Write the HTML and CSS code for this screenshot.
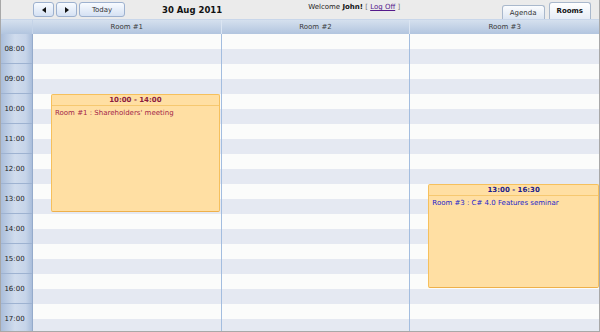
FILE: index.html
```html
<!DOCTYPE html>
<html lang="en">
<head>
    <meta charset="UTF-8">
    <title>Rooms Scheduler</title>
    <link rel="stylesheet" href="styles.css">
</head>
<body>
    <div class="scheduler">
        <div class="toolbar">
            <div class="nav">
                <button class="btn arrow"><span class="tri left"></span></button>
                <button class="btn arrow"><span class="tri right"></span></button>
                <button class="btn today">Today</button>
            </div>
            <div class="date">30 Aug 2011</div>
            <div class="welcome">Welcome <b>John!</b> <span class="br">[</span> <a href="#">Log Off</a> <span class="br">]</span></div>
            <div class="tabs">
                <div class="tab">Agenda</div>
                <div class="tab active">Rooms</div>
            </div>
        </div>

        <div class="grid header">
            <div class="corner"></div>
            <div class="room">Room #1</div>
            <div class="room">Room #2</div>
            <div class="room last">Room #3</div>
        </div>

        <div class="grid body">
            <div class="times">
                <div class="hour">08:00</div>
                <div class="hour">09:00</div>
                <div class="hour">10:00</div>
                <div class="hour">11:00</div>
                <div class="hour">12:00</div>
                <div class="hour">13:00</div>
                <div class="hour">14:00</div>
                <div class="hour">15:00</div>
                <div class="hour">16:00</div>
                <div class="hour">17:00</div>
            </div>
            <div class="day">
                <div class="event red" style="top: 60px; height: 118px;">
                    <div class="event_time">10:00 - 14:00</div>
                    <div class="event_text">Room #1 : Shareholders' meeting</div>
                </div>
            </div>
            <div class="day"></div>
            <div class="day last">
                <div class="event blue" style="top: 150px; height: 104px;">
                    <div class="event_time">13:00 - 16:30</div>
                    <div class="event_text">Room #3 : C# 4.0 Features seminar</div>
                </div>
            </div>
        </div>
    </div>
</body>
</html>
```

FILE: styles.css
```css
  body {
      margin: 0;
      font-family: "DejaVu Sans", Tahoma, sans-serif;
      font-size: 7px;
      color: #333;
  }

  .scheduler {
      width: 600px;
      height: 332px;
      box-sizing: border-box;
      border: 1px solid #a8a8a8;
      border-top: none;
      display: flex;
      flex-direction: column;
      overflow: hidden;
  }

  /* Top bar */
  .toolbar {
      height: 19px;
      flex-shrink: 0;
      background: #ebebeb;
      display: flex;
      align-items: flex-start;
      padding-left: 32px;
  }

  .nav {
      display: flex;
      gap: 2px;
      margin-top: 2px;
  }

  .btn {
      height: 15px;
      border: 1px solid #9db1cf;
      border-radius: 3px;
      background: linear-gradient(#f8fbff, #d5e1f3);
      font-family: inherit;
      font-size: 7px;
      color: #333;
      padding: 0;
      display: flex;
      align-items: center;
      justify-content: center;
  }

  .btn.arrow {
      width: 21px;
  }

  .btn.today {
      width: 46px;
  }

  .tri {
      width: 0;
      height: 0;
      border-top: 3px solid transparent;
      border-bottom: 3px solid transparent;
  }

  .tri.left {
      border-right: 4px solid #111;
  }

  .tri.right {
      border-left: 4px solid #111;
  }

  .date {
      margin-left: 37px;
      margin-top: 5px;
      font-weight: bold;
      font-size: 8.5px;
      color: #111;
  }

  .welcome {
      margin-left: 86px;
      margin-top: 3px;
      color: #222;
  }

  .welcome b {
      color: #111;
  }

  .welcome .br {
      color: #777;
  }

  .welcome a {
      color: #551a8b;
  }

  .tabs {
      margin-left: auto;
      margin-right: 8px;
      align-self: flex-end;
      display: flex;
      align-items: flex-end;
      gap: 4px;
  }

  .tab {
      height: 13px;
      padding: 0 7px;
      border: 1px solid #a9b8cc;
      border-bottom: none;
      border-radius: 3px 3px 0 0;
      background: linear-gradient(#fbfcfe, #dde6f2);
      display: flex;
      align-items: center;
      color: #333;
  }

  .tab.active {
      height: 16px;
      padding: 0 7px;
      font-weight: bold;
      color: #111;
      background: linear-gradient(#ffffff, #e6edf7);
  }

  /* Columns */
  .grid {
      display: grid;
      grid-template-columns: 32px repeat(3, 1fr);
  }

  .header {
      height: 15px;
      flex-shrink: 0;
      background: linear-gradient(#d5e0ee, #b2c5df);
      border-top: 1px solid #c8d6ea;
      box-sizing: border-box;
  }

  .corner {
      border-right: 1px solid #c5d4e8;
  }

  .room {
      border-right: 1px solid #dbe5f2;
      text-align: center;
      line-height: 14px;
      color: #3a3a3a;
  }

  .room.last,
  .day.last {
      border-right: none;
  }

  .body {
      flex: 1;
      overflow: hidden;
  }

  .times {
      border-right: 1px solid #95abcb;
      background: linear-gradient(to right, #aabedb, #d0dced 45%, #c6d4e9 80%, #a9bdda);
  }

  .hour {
      height: 30px;
      box-sizing: border-box;
      border-bottom: 1px solid #9db2d1;
      display: flex;
      align-items: center;
      justify-content: center;
      padding-right: 4px;
      color: #222;
  }

  .day {
      position: relative;
      border-right: 1px solid #a3bddf;
      background: repeating-linear-gradient(to bottom, #fbfcfb 0, #fbfcfb 15px, #e5e9f2 15px, #e5e9f2 30px);
  }

  /* Events */
  .event {
      position: absolute;
      left: 18px;
      right: 1px;
      box-sizing: border-box;
      background: #ffdfa3;
      border: 1px solid #f6c05c;
      border-bottom-color: #eeb04a;
      border-radius: 2px;
  }

  .event_time {
      height: 11px;
      box-sizing: border-box;
      border-bottom: 1px solid #f6c870;
      text-align: center;
      font-weight: bold;
      line-height: 10px;
  }

  .event_text {
      padding: 3px 3px;
  }

  .event.red .event_time {
      color: #8c1a3e;
  }

  .event.red .event_text {
      color: #a32549;
  }

  .event.blue {
      right: 0;
  }

  .event.blue .event_time {
      color: #1c1c8c;
  }

  .event.blue .event_text {
      color: #2424cc;
  }
```
